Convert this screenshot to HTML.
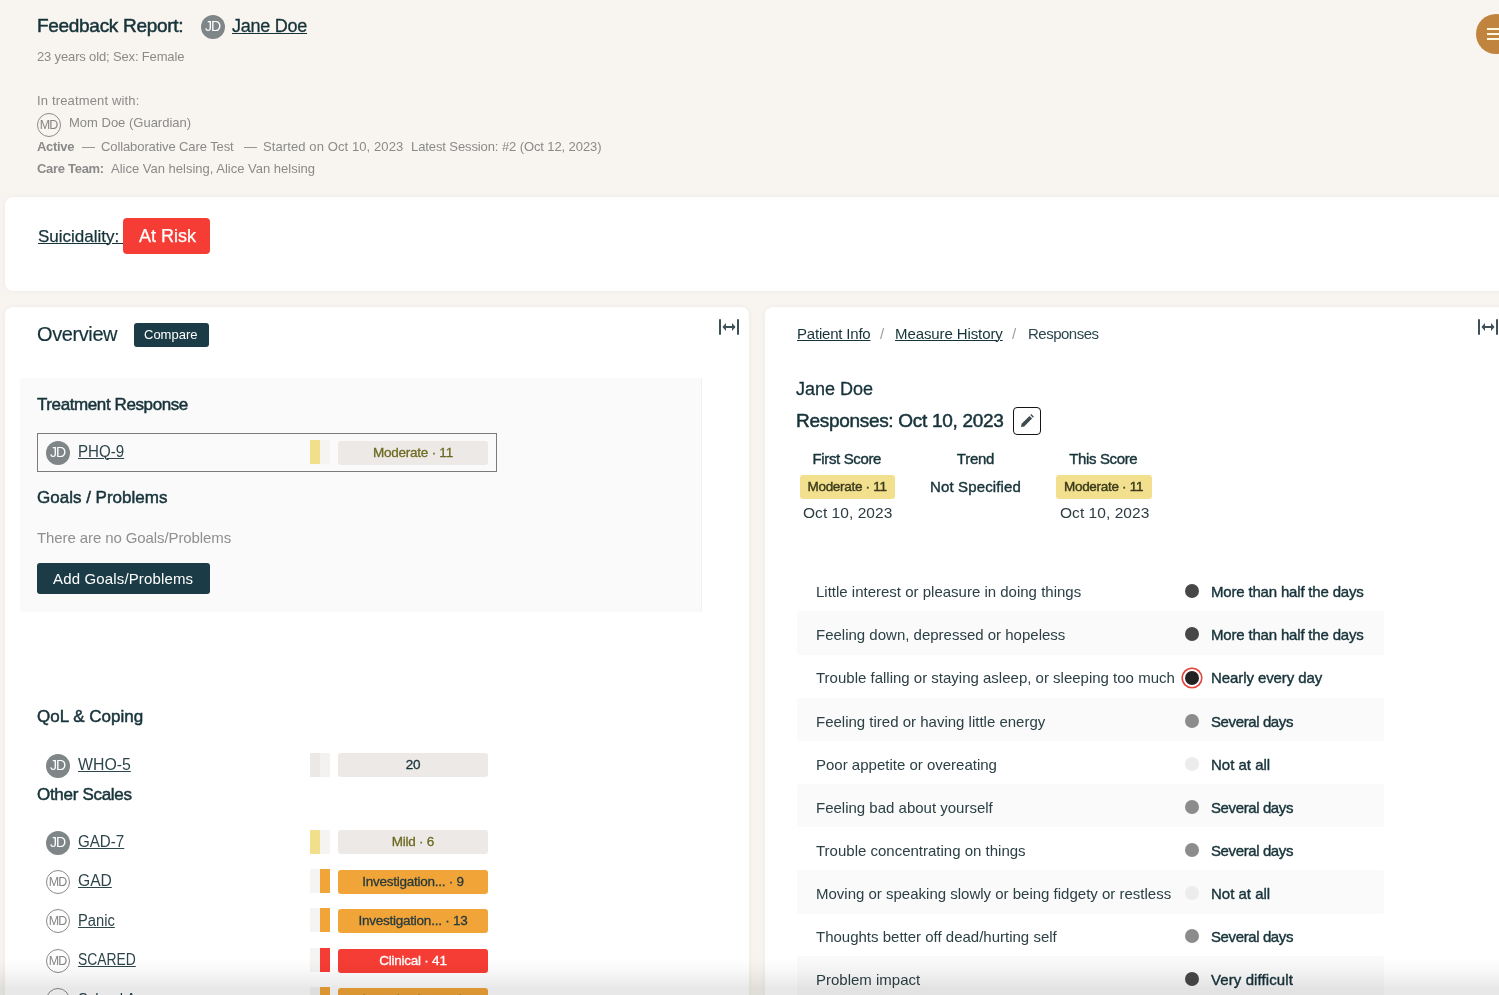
<!DOCTYPE html>
<html><head><meta charset="utf-8">
<style>
*{box-sizing:border-box;margin:0;padding:0}
html,body{width:1499px;height:995px;overflow:hidden}
body{background:#f8f5f0;font-family:"Liberation Sans",sans-serif;color:#1f3b44;position:relative}
.a{position:absolute;white-space:nowrap;line-height:1}
.b{font-weight:700}
.u{text-decoration:underline;text-underline-offset:1px;text-decoration-thickness:1px}
.card{position:absolute;background:#fff;border-radius:8px;box-shadow:0 0 5px rgba(40,30,20,0.05)}
.sb{-webkit-text-stroke:0.5px currentColor}
.sb4{-webkit-text-stroke:0.4px currentColor}
.av{position:absolute;width:24px;height:24px;border-radius:50%;background:#7f8688;color:#fff;font-size:14px;line-height:23px;text-align:center;letter-spacing:-1px;text-indent:-1px}
.avo{position:absolute;width:24px;height:24px;border-radius:50%;border:1px solid #8a8a8a;color:#858585;font-size:12.5px;line-height:22px;text-align:center;letter-spacing:-1px;text-indent:-1px}
.bar{position:absolute;width:10px;height:24px}
.badge{position:absolute;width:150px;height:24px;border-radius:3px;font-size:13.5px;letter-spacing:-0.25px;-webkit-text-stroke:0.3px currentColor;line-height:24px;text-align:center;background:#ede9e7;color:#6d6a22}
.gray{color:#8a8a8a}
</style></head><body><div id="wrap" style="position:absolute;left:0;top:0;width:1499px;height:995px;overflow:hidden;will-change:transform">

<!-- header -->
<div class="a sb" style="left:37px;top:16px;font-size:19px;letter-spacing:-0.3px;color:#17333a">Feedback Report:</div>
<div class="av" style="left:201px;top:15px">JD</div>
<div class="a u" style="left:232px;top:17px;font-size:18px;letter-spacing:-0.25px;color:#17333a;-webkit-text-stroke:0.3px #17333a">Jane Doe</div>
<div class="a gray" style="left:37px;top:49.5px;font-size:13px;letter-spacing:-0.15px">23 years old; Sex: Female</div>
<div class="a gray" style="left:37px;top:94px;font-size:13px;letter-spacing:0.15px">In treatment with:</div>
<div class="avo" style="left:37px;top:112.5px">MD</div>
<div class="a gray" style="left:69px;top:116px;font-size:13px">Mom Doe (Guardian)</div>
<div class="a gray" style="left:37px;top:139.5px;font-size:13px"><span class="b" style="letter-spacing:-0.3px">Active</span></div>
<div class="a gray" style="left:82px;top:139.5px;font-size:13px">—</div>
<div class="a gray" style="left:101px;top:139.5px;font-size:13px;letter-spacing:-0.1px">Collaborative Care Test</div>
<div class="a gray" style="left:244px;top:139.5px;font-size:13px">—</div>
<div class="a gray" style="left:263px;top:139.5px;font-size:13px;letter-spacing:0.1px">Started on Oct 10, 2023</div>
<div class="a gray" style="left:411px;top:139.5px;font-size:13px;letter-spacing:-0.1px">Latest Session: #2 (Oct 12, 2023)</div>
<div class="a gray" style="left:37px;top:161.5px;font-size:13px"><span class="b" style="letter-spacing:-0.3px">Care Team:</span></div>
<div class="a gray" style="left:111px;top:161.5px;font-size:13px">Alice Van helsing, Alice Van helsing</div>

<!-- hamburger -->
<div style="position:absolute;left:1476px;top:14px;width:40px;height:40px;border-radius:50%;background:#c1843f"></div>
<div style="position:absolute;left:1487px;top:28px;width:14px;height:2px;background:#fff8e0"></div>
<div style="position:absolute;left:1487px;top:33px;width:14px;height:2px;background:#fff8e0"></div>
<div style="position:absolute;left:1487px;top:38px;width:14px;height:2px;background:#fff8e0"></div>

<!-- suicidality card -->
<div class="card" style="left:5px;top:197px;width:1510px;height:94px"></div>
<div class="a u" style="left:38px;top:227.5px;font-size:17px;color:#17333a;-webkit-text-stroke:0.25px #17333a">Suicidality:&nbsp;</div>
<div style="position:absolute;left:123px;top:218px;width:87px;height:36px;border-radius:4px;background:#f63d35"></div>
<div class="a" style="left:139px;top:226.5px;font-size:18px;color:#fff;-webkit-text-stroke:0.25px #fff">At Risk</div>

<!-- left panel -->
<div class="card" style="left:5px;top:306.5px;width:744px;height:800px"></div>
<div class="a" style="left:37px;top:324.2px;font-size:20px;letter-spacing:-0.4px;color:#17333a;-webkit-text-stroke:0.2px #17333a">Overview</div>
<div style="position:absolute;left:134px;top:323px;width:75px;height:24px;border-radius:3px;background:#1b3c46"></div>
<div class="a" style="left:144px;top:328px;font-size:13px;color:#fff">Compare</div>
<svg style="position:absolute;left:717px;top:317px" width="24" height="20" viewBox="0 0 24 20">
 <g fill="none" stroke="#3e5157" stroke-width="2" stroke-linecap="round">
  <line x1="3" y1="3" x2="3" y2="17"/><line x1="21" y1="3" x2="21" y2="17"/>
  <line x1="7" y1="10" x2="17" y2="10"/>
 </g>
 <path d="M5.5 10 L9 6 L9 14 Z M18.5 10 L15 6 L15 14 Z" fill="#3e5157"/>
</svg>

<!-- gray box -->
<div style="position:absolute;left:20px;top:378px;width:682px;height:234px;background:#fafafa;border-radius:4px 0 0 4px;border-right:1.5px solid #f1f1f1"></div>
<div class="a sb" style="left:37px;top:395.6px;font-size:17px;letter-spacing:-0.4px;color:#17333a">Treatment Response</div>
<div style="position:absolute;left:37px;top:433px;width:460px;height:39px;border:1px solid #7b7b7b"></div>
<div class="av" style="left:46px;top:441px">JD</div>
<div class="a u" style="left:78px;top:443.5px;font-size:16px;color:#2d454b;transform:scaleX(0.944);transform-origin:0 0">PHQ-9</div>
<div class="bar" style="left:310px;top:440px;background:#f2df8c"></div>
<div class="bar" style="left:320px;top:440px;background:#f6f4f0"></div>
<div class="badge" style="left:338px;top:441px">Moderate · 11</div>

<div class="a sb" style="left:37px;top:488.8px;font-size:17px;color:#17333a">Goals / Problems</div>
<div class="a" style="left:37px;top:529.5px;font-size:15px;letter-spacing:-0.1px;color:#8f8f8f">There are no Goals/Problems</div>
<div style="position:absolute;left:37px;top:563px;width:173px;height:31px;border-radius:3px;background:#1b3c46"></div>
<div class="a" style="left:53px;top:571px;font-size:15px;letter-spacing:0.15px;color:#fff">Add Goals/Problems</div>

<div class="a sb" style="left:37px;top:708px;font-size:17px;color:#17333a">QoL &amp; Coping</div>
<div class="av" style="left:46px;top:754px">JD</div>
<div class="a u" style="left:78px;top:756.5px;font-size:16px;color:#2d454b;transform:scaleX(0.99);transform-origin:0 0">WHO-5</div>
<div class="bar" style="left:310px;top:753px;background:#ebe8e6"></div>
<div class="bar" style="left:320px;top:753px;background:#f4f2f0"></div>
<div class="badge" style="left:338px;top:753px;color:#17333a">20</div>

<div class="a sb" style="left:37px;top:786px;font-size:17px;letter-spacing:-0.3px;color:#17333a">Other Scales</div>
<div class="av" style="left:46px;top:831px">JD</div>
<div class="a u" style="left:78px;top:834.3px;font-size:16px;color:#2d454b;transform:scaleX(0.946);transform-origin:0 0">GAD-7</div>
<div class="bar" style="left:310px;top:830px;background:#f2df8c"></div>
<div class="bar" style="left:320px;top:830px;background:#f6f4f0"></div>
<div class="badge" style="left:338px;top:830px">Mild · 6</div>

<div class="avo" style="left:46px;top:870px">MD</div>
<div class="a u" style="left:78px;top:873.2px;font-size:16px;color:#2d454b;transform:scaleX(0.976);transform-origin:0 0">GAD</div>
<div class="bar" style="left:310px;top:869px;background:#f5f4f3"></div>
<div class="bar" style="left:320px;top:869px;background:#f1a438"></div>
<div class="badge" style="left:338px;top:870px;background:#f1a438;color:#283a3c">Investigation... · 9</div>

<div class="avo" style="left:46px;top:909px">MD</div>
<div class="a u" style="left:78px;top:912.5px;font-size:16px;color:#2d454b;transform:scaleX(0.92);transform-origin:0 0">Panic</div>
<div class="bar" style="left:310px;top:908px;background:#f5f4f3"></div>
<div class="bar" style="left:320px;top:908px;background:#f1a438"></div>
<div class="badge" style="left:338px;top:909px;background:#f1a438;color:#283a3c">Investigation... · 13</div>

<div class="avo" style="left:46px;top:949px">MD</div>
<div class="a u" style="left:78px;top:952.2px;font-size:16px;color:#2d454b;transform:scaleX(0.867);transform-origin:0 0">SCARED</div>
<div class="bar" style="left:310px;top:948px;background:#f5f4f3"></div>
<div class="bar" style="left:320px;top:948px;background:#f63d35"></div>
<div class="badge" style="left:338px;top:949px;background:#f63d35;color:#fff">Clinical · 41</div>

<div class="avo" style="left:46px;top:988px">MD</div>
<div class="a u" style="left:78px;top:991.5px;font-size:16px;color:#2d454b;transform:scaleX(0.92);transform-origin:0 0">School A</div>
<div class="bar" style="left:310px;top:987px;background:#f5f4f3"></div>
<div class="bar" style="left:320px;top:987px;background:#f1a438"></div>
<div class="badge" style="left:338px;top:988px;background:#f1a438;color:#283a3c">Investigation... · 8</div>

<!-- right panel -->
<div class="card" style="left:765px;top:306.5px;width:800px;height:800px"></div>
<div class="a u" style="left:797px;top:326px;font-size:15px;letter-spacing:-0.2px;color:#17333a">Patient Info</div>
<div class="a" style="left:880px;top:326px;font-size:15px;color:#9aa0a2">/</div>
<div class="a u" style="left:895px;top:326px;font-size:15px;letter-spacing:-0.1px;color:#17333a">Measure History</div>
<div class="a" style="left:1012px;top:326px;font-size:15px;color:#9aa0a2">/</div>
<div class="a" style="left:1028px;top:326px;font-size:15px;letter-spacing:-0.5px;color:#2b464d">Responses</div>
<svg style="position:absolute;left:1476px;top:317px" width="24" height="20" viewBox="0 0 24 20">
 <g fill="none" stroke="#3e5157" stroke-width="2" stroke-linecap="round">
  <line x1="3" y1="3" x2="3" y2="17"/><line x1="21" y1="3" x2="21" y2="17"/>
  <line x1="7" y1="10" x2="17" y2="10"/>
 </g>
 <path d="M5.5 10 L9 6 L9 14 Z M18.5 10 L15 6 L15 14 Z" fill="#3e5157"/>
</svg>

<div class="a" style="left:796px;top:380px;font-size:18px;color:#17333a;-webkit-text-stroke:0.3px #17333a">Jane Doe</div>
<div class="a sb" style="left:796px;top:411.4px;font-size:19px;letter-spacing:-0.3px;color:#17333a">Responses: Oct 10, 2023</div>
<div style="position:absolute;left:1013px;top:407px;width:28px;height:28px;border:1px solid #151515;border-radius:4px"></div>
<svg style="position:absolute;left:1019px;top:413px" width="16" height="16" viewBox="0 0 16 16"><path d="M2 14 L2.6 10.8 L10.5 2.9 L13.1 5.5 L5.2 13.4 Z M11.3 2.1 L12.3 1.1 L14.9 3.7 L13.9 4.7 Z" fill="#3d4b4f"/></svg>

<div class="a sb4" style="left:812.5px;top:450.5px;font-size:15px;letter-spacing:-0.36px;color:#17333a">First Score</div>
<div class="a sb4" style="left:956.8px;top:450.5px;font-size:15px;letter-spacing:-0.26px;color:#17333a">Trend</div>
<div class="a sb4" style="left:1069.3px;top:450.5px;font-size:15px;letter-spacing:-0.37px;color:#17333a">This Score</div>
<div style="position:absolute;left:800px;top:475px;width:95px;height:24px;border-radius:3px;background:#f3e08e"></div>
<div class="a sb4" style="left:807.5px;top:479.8px;font-size:13.5px;letter-spacing:-0.3px;color:#3a3a1c">Moderate · 11</div>
<div class="a sb4" style="left:930px;top:479.3px;font-size:15px;letter-spacing:0.14px;color:#17333a">Not Specified</div>
<div style="position:absolute;left:1056px;top:475px;width:96px;height:24px;border-radius:3px;background:#f3e08e"></div>
<div class="a sb4" style="left:1064px;top:479.8px;font-size:13.5px;letter-spacing:-0.3px;color:#3a3a1c">Moderate · 11</div>
<div class="a" style="left:803px;top:505px;font-size:15.5px;letter-spacing:0.05px;color:#2b3d42">Oct 10, 2023</div>
<div class="a" style="left:1060px;top:505px;font-size:15.5px;letter-spacing:0.05px;color:#2b3d42">Oct 10, 2023</div>

<!--ROWS-->
<div class="a" style="left:816px;top:584.1px;font-size:15px;color:#2c4045">Little interest or pleasure in doing things</div>
<div style="position:absolute;left:1185px;top:584.3px;width:14px;height:14px;border-radius:50%;background:#474747"></div>
<div class="a sb4" style="left:1211px;top:584.1px;font-size:15px;letter-spacing:-0.18px;color:#17333a">More than half the days</div>
<div style="position:absolute;left:796.5px;top:611.4px;width:587px;height:43.5px;background:#fafafa;border-radius:2px"></div>
<div class="a" style="left:816px;top:627.2px;font-size:15px;color:#2c4045">Feeling down, depressed or hopeless</div>
<div style="position:absolute;left:1185px;top:627.4px;width:14px;height:14px;border-radius:50%;background:#474747"></div>
<div class="a sb4" style="left:1211px;top:627.2px;font-size:15px;letter-spacing:-0.18px;color:#17333a">More than half the days</div>
<div class="a" style="left:816px;top:670.3px;font-size:15px;color:#2c4045">Trouble falling or staying asleep, or sleeping too much</div>
<div style="position:absolute;left:1185px;top:670.5px;width:14px;height:14px;border-radius:50%;background:#222222;box-shadow:0 0 0 2px #fff,0 0 0 3.6px #e2453c"></div>
<div class="a sb4" style="left:1211px;top:670.3px;font-size:15px;letter-spacing:-0.09px;color:#17333a">Nearly every day</div>
<div style="position:absolute;left:796.5px;top:697.7px;width:587px;height:43.5px;background:#fafafa;border-radius:2px"></div>
<div class="a" style="left:816px;top:713.5px;font-size:15px;color:#2c4045">Feeling tired or having little energy</div>
<div style="position:absolute;left:1185px;top:713.7px;width:14px;height:14px;border-radius:50%;background:#8c8c8c"></div>
<div class="a sb4" style="left:1211px;top:713.5px;font-size:15px;letter-spacing:-0.39px;color:#17333a">Several days</div>
<div class="a" style="left:816px;top:756.6px;font-size:15px;color:#2c4045">Poor appetite or overeating</div>
<div style="position:absolute;left:1185px;top:756.8px;width:14px;height:14px;border-radius:50%;background:#ececec"></div>
<div class="a sb4" style="left:1211px;top:756.6px;font-size:15px;letter-spacing:0px;color:#17333a">Not at all</div>
<div style="position:absolute;left:796.5px;top:783.9px;width:587px;height:43.5px;background:#fafafa;border-radius:2px"></div>
<div class="a" style="left:816px;top:799.7px;font-size:15px;color:#2c4045">Feeling bad about yourself</div>
<div style="position:absolute;left:1185px;top:799.9px;width:14px;height:14px;border-radius:50%;background:#8c8c8c"></div>
<div class="a sb4" style="left:1211px;top:799.7px;font-size:15px;letter-spacing:-0.39px;color:#17333a">Several days</div>
<div class="a" style="left:816px;top:842.8px;font-size:15px;color:#2c4045">Trouble concentrating on things</div>
<div style="position:absolute;left:1185px;top:843.0px;width:14px;height:14px;border-radius:50%;background:#8c8c8c"></div>
<div class="a sb4" style="left:1211px;top:842.8px;font-size:15px;letter-spacing:-0.39px;color:#17333a">Several days</div>
<div style="position:absolute;left:796.5px;top:870.1px;width:587px;height:43.5px;background:#fafafa;border-radius:2px"></div>
<div class="a" style="left:816px;top:885.9px;font-size:15px;color:#2c4045">Moving or speaking slowly or being fidgety or restless</div>
<div style="position:absolute;left:1185px;top:886.1px;width:14px;height:14px;border-radius:50%;background:#ececec"></div>
<div class="a sb4" style="left:1211px;top:885.9px;font-size:15px;letter-spacing:0px;color:#17333a">Not at all</div>
<div class="a" style="left:816px;top:929.1px;font-size:15px;color:#2c4045">Thoughts better off dead/hurting self</div>
<div style="position:absolute;left:1185px;top:929.3px;width:14px;height:14px;border-radius:50%;background:#8c8c8c"></div>
<div class="a sb4" style="left:1211px;top:929.1px;font-size:15px;letter-spacing:-0.39px;color:#17333a">Several days</div>
<div style="position:absolute;left:796.5px;top:956.4px;width:587px;height:43.5px;background:#fafafa;border-radius:2px"></div>
<div class="a" style="left:816px;top:972.2px;font-size:15px;color:#2c4045">Problem impact</div>
<div style="position:absolute;left:1185px;top:972.4px;width:14px;height:14px;border-radius:50%;background:#474747"></div>
<div class="a sb4" style="left:1211px;top:972.2px;font-size:15px;letter-spacing:0.1px;color:#17333a">Very difficult</div>
<!--/ROWS-->

<!-- bottom shadow -->
<div style="position:absolute;left:0;top:958px;width:1499px;height:37px;background:linear-gradient(to bottom,rgba(0,0,0,0),rgba(0,0,0,0.03) 40%,rgba(0,0,0,0.09) 82%,rgba(0,0,0,0.09))"></div>
</div></body></html>
